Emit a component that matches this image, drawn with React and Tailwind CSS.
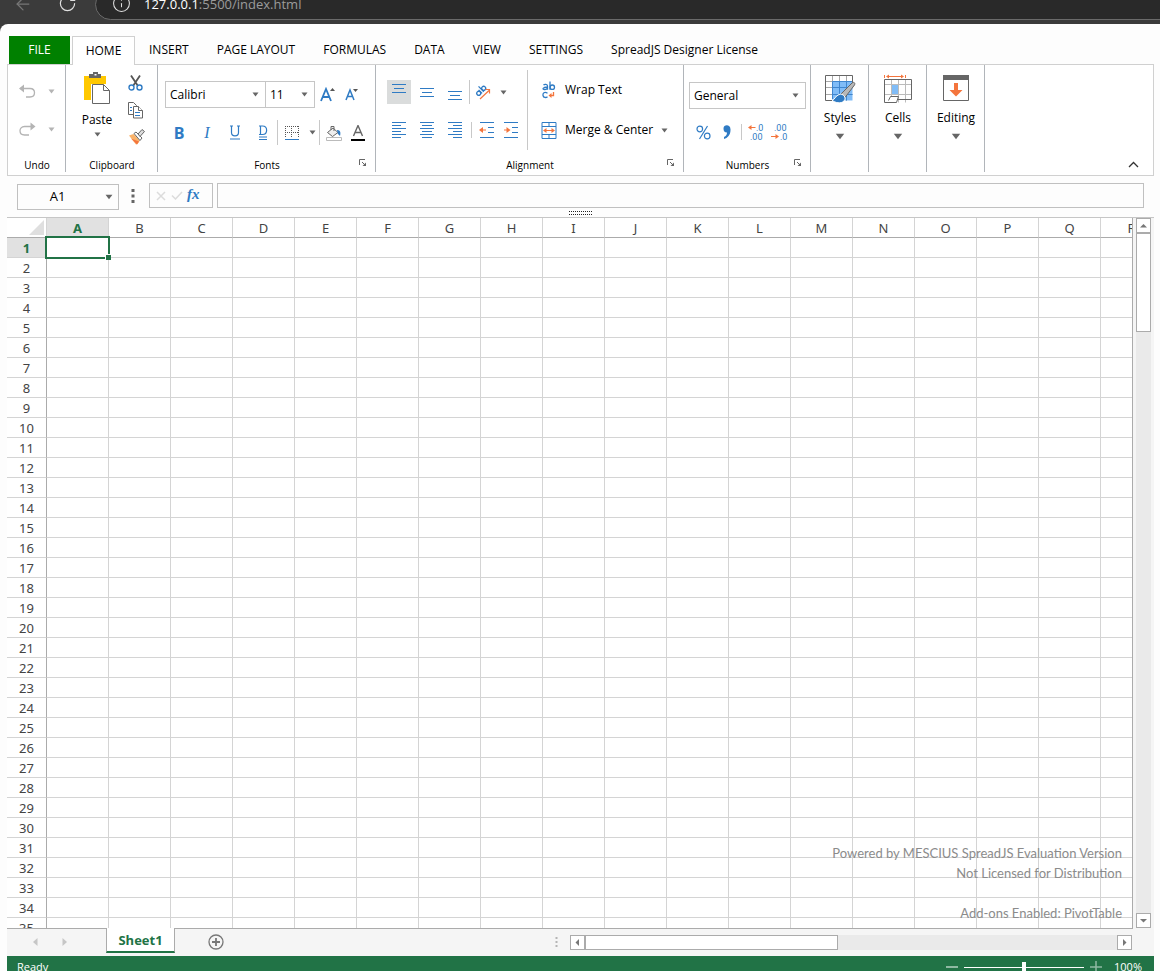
import { ArrowLeft, Info, RotateCw } from 'lucide-react';

const COLUMNS = 'ABCDEFGHIJKLMNOPQR'.split('');
const ROWS = Array.from({ length: 35 }, (_, i) => i + 1);

const TABS = ['INSERT', 'PAGE LAYOUT', 'FORMULAS', 'DATA', 'VIEW', 'SETTINGS', 'SpreadJS Designer License'];

const BLUE = '#2f7bc4';
const ORANGE = '#f4753d';
const GRAY = '#666666';

function Caret({ className = 'text-[#666]' }) {
  return (
    <svg width="7" height="5" viewBox="0 0 7 5" className={`shrink-0 ${className}`}>
      <path d="M0.5 0.5h6l-3 4z" fill="currentColor" />
    </svg>
  );
}

function IconButton({ label, className = 'w-6', children }) {
  return (
    <button type="button" aria-label={label} className={`flex h-6 shrink-0 items-center justify-center ${className}`}>
      {children}
    </button>
  );
}

function Lines({ rows }) {
  return (
    <svg width="24" height="24" viewBox="0 0 24 24" shapeRendering="crispEdges">
      {rows.map(([x, y, w]) => (
        <rect key={y} x={x} y={y} width={w} height="1" fill={BLUE} />
      ))}
    </svg>
  );
}

function Divider({ className = 'h-[25px]' }) {
  return <div className={`w-px shrink-0 bg-[#c8c8c8] ${className}`} />;
}

function Combo({ label, value, className }) {
  return (
    <div className={`relative flex h-[27px] items-center border border-[#c6c6c6] bg-white ${className}`}>
      <select
        aria-label={label}
        defaultValue={value}
        className="h-full w-full appearance-none bg-transparent pl-1 text-xs text-black outline-none"
      >
        <option>{value}</option>
      </select>
      <Caret className="pointer-events-none absolute right-[6px] text-[#666]" />
    </div>
  );
}

function Group({ title, launcher, className, children }) {
  return (
    <section className={`flex h-[107px] shrink-0 flex-col border-r border-[#b1b5ba] ${className}`}>
      <div className="flex-1">{children}</div>
      {title && (
        <div className="relative flex h-[13px] items-center justify-center pl-px text-[10px] leading-[13px]">
          {title}
          {launcher && (
            <button type="button" aria-label={`${title} settings`} className="absolute right-[8px] top-0">
              <svg width="8" height="8" viewBox="0 0 8 8" fill="none" stroke={GRAY}>
                <path d="M0.5 6V0.5H6M3 3l3.5 3.5" />
                <path d="M7 3.5V7H3.5z" fill={GRAY} stroke="none" />
              </svg>
            </button>
          )}
        </div>
      )}
    </section>
  );
}

function BigButton({ label, children }) {
  return (
    <Group className="w-[58px]">
      <button type="button" className="flex w-full flex-col items-center pl-px pt-[9px] text-xs">
        {children}
        <span className="mt-[3px] leading-[18px]">{label}</span>
        <Caret className="mt-[6px] h-[7px] w-[10px] text-[#666]" />
      </button>
    </Group>
  );
}

function UndoGroup() {
  return (
    <Group title="Undo" className="w-[58px]">
      <div className="flex flex-col pt-[7px] text-[#b4b4b4]">
        <button type="button" aria-label="Undo" className="flex h-[38px] items-center gap-3 pl-[11px]">
          <svg width="17" height="15" viewBox="0 0 17 15" fill="none" stroke="currentColor" strokeWidth="1.3">
            <path d="M1.5 4.5h9.5c6 0 6 8.5 0 8.5H7" />
            <path d="M0 4.5L5 0.5v8z" fill="currentColor" stroke="none" />
          </svg>
          <Caret className="text-[#b4b4b4]" />
        </button>
        <button type="button" aria-label="Redo" className="flex h-[38px] items-center gap-3 pl-[11px]">
          <svg width="17" height="15" viewBox="0 0 17 15" fill="none" stroke="currentColor" strokeWidth="1.3">
            <path d="M15 4.5H5.5c-6 0-6 8.5 0 8.5H10" />
            <path d="M16.5 4.5L11.5 0.5v8z" fill="currentColor" stroke="none" />
          </svg>
          <Caret className="text-[#b4b4b4]" />
        </button>
      </div>
    </Group>
  );
}

function ClipboardGroup() {
  return (
    <Group title="Clipboard" className="w-[92px]">
      <div className="flex">
        <button type="button" className="ml-[10px] flex w-[42px] flex-col items-center pt-[7px] text-xs">
          <svg width="26" height="32" viewBox="0 0 26 32">
            <path d="M0 4h22v8H7v16H0z" fill="#ffc800" />
            <path d="M5 5V2h4V0h5v2h3v4H5z" fill={GRAY} />
            <rect x="10.5" y="2" width="2" height="1.5" fill="#fff" />
            <path d="M8.5 12.5h11l6 6v13h-17z" fill="#fff" stroke={GRAY} />
            <path d="M19.5 12.5v6h6" fill="none" stroke={GRAY} />
          </svg>
          <span className="mt-[7px] leading-[18px]">Paste</span>
          <Caret className="mt-[3px] text-[#666]" />
        </button>
        <div className="ml-px flex flex-col gap-[3px] pt-[6px]">
          <IconButton label="Cut" className="w-8">
            <svg width="15" height="16" viewBox="0 0 15 16" fill="none" strokeWidth="1.4">
              <path d="M3 0.5l7 10.5M12 0.5L5 11" stroke="#555" strokeWidth="1.8" />
              <circle cx="3.5" cy="12.5" r="2.5" stroke={BLUE} />
              <circle cx="11.5" cy="12.5" r="2.5" stroke={BLUE} />
            </svg>
          </IconButton>
          <IconButton label="Copy" className="w-8">
            <svg width="15" height="17" viewBox="0 0 15 17" fill="#fff" stroke={GRAY}>
              <path d="M0.5 0.5h5l3 3v9h-8z" />
              <path d="M5.5 4.5h5l4 4v7.5h-9z" />
              <path d="M10.5 4.5v4h4" />
              <path d="M2 5.5h2M2 8.5h2M7 10.5h5M7 13.5h5" stroke={BLUE} />
            </svg>
          </IconButton>
          <IconButton label="Format painter" className="w-9">
            <svg width="16" height="16" viewBox="0 0 16 16">
              <path d="M0 6.5l4.5-1.5 6.5 6.5-2.5 3.5-1.5 0.5z" fill="#f9b36b" />
              <path d="M2 9.500l8 3-2 3z" fill={ORANGE} />
              <path d="M5 4.5l2-1.5 6 6-2 2.5z" fill="#fff" stroke={GRAY} />
              <path d="M9 5l4-4.5 2.5 2-4.5 5z" fill="#ddd" stroke={GRAY} />
            </svg>
          </IconButton>
        </div>
      </div>
    </Group>
  );
}

function FontsGroup() {
  return (
    <Group title="Fonts" launcher className="w-[218px]">
      <div className="flex items-center pl-[7px] pt-4">
        <Combo label="Font family" value="Calibri" className="w-[101px]" />
        <Combo label="Font size" value="11" className="-ml-px w-[50px]" />
        <IconButton label="Increase font size" className="w-[26px]">
          <svg width="16" height="16" viewBox="0 0 16 16">
            <path d="M1 14L6 2l5 12M3 10h6" fill="none" stroke={BLUE} strokeWidth="1.8" />
            <path d="M10 4l2.5-3 2.5 3z" fill="#555" />
          </svg>
        </IconButton>
        <IconButton label="Decrease font size" className="w-[22px]">
          <svg width="14" height="14" viewBox="0 0 14 14">
            <path d="M1 12L5 2l4 10M3 8.5h4" fill="none" stroke={BLUE} strokeWidth="1.5" />
            <path d="M8 1h5l-2.5 3z" fill="#555" />
          </svg>
        </IconButton>
      </div>
      <div className="flex items-center pl-[7px] pt-3 text-base leading-5 text-[#2f7bc4]">
        <IconButton label="Bold" className="w-7 font-bold">B</IconButton>
        <IconButton label="Italic" className="w-7 font-['Liberation_Serif'] italic">I</IconButton>
        <IconButton label="Underline" className="w-7">
          <svg width="12" height="15" viewBox="0 0 12 15" fill="none" stroke={BLUE} strokeWidth="1.2">
            <path d="M2.5 1v6.5c0 4.5 7 4.5 7 0V1M1 1h3M8 1h3M1 14h10" />
          </svg>
        </IconButton>
        <IconButton label="Double underline" className="w-7">
          <svg width="10" height="15" viewBox="0 0 10 15" fill="none" stroke={BLUE} strokeWidth="1.2">
            <path d="M2.5 1v8.5h2c5.5 0 5.5-8.5 0-8.5H1M1 9.5h2M1 12h8M1 14.5h8" />
          </svg>
        </IconButton>
        <Divider />
        <IconButton label="Borders" className="w-7">
          <svg width="14" height="14" viewBox="0 0 14 14" fill="none" shapeRendering="crispEdges">
            <path d="M0 0.5h14M0 6.5h14M0.5 0v12M6.5 0v12M13.5 0v12" stroke="#555" strokeDasharray="1 1" />
            <path d="M0 13.5h14" stroke={BLUE} />
          </svg>
        </IconButton>
        <IconButton label="More borders" className="w-[13px]"><Caret /></IconButton>
        <Divider />
        <IconButton label="Fill color" className="w-7">
          <svg width="16" height="16" viewBox="0 0 16 16">
            <path d="M1.5 7.5L7 3l5 4.5-5.5 4z" fill="#eee" stroke={GRAY} />
            <path d="M5 5V1.5h3V6" fill="none" stroke={GRAY} />
            <path d="M11 5c3 0 4 2 3 6l-2-2z" fill={BLUE} />
            <path d="M0.5 12.5h15v3H0.5z" fill="#fff" stroke="#bbb" />
          </svg>
        </IconButton>
        <IconButton label="Font color" className="w-5">
          <svg width="14" height="16" viewBox="0 0 14 16">
            <path d="M2.5 11L7 0.5 11.5 11M4 7.5h6" fill="none" stroke={GRAY} strokeWidth="1.4" />
            <path d="M0 14h14v2H0z" fill="#000" />
          </svg>
        </IconButton>
      </div>
    </Group>
  );
}

function AlignmentGroup() {
  return (
    <Group title="Alignment" launcher className="w-[308px]">
      <div className="flex">
        <div className="w-[151px] pl-[11px] pt-[15px]">
          <div className="flex items-center">
            <IconButton label="Top align" className="w-6 bg-[#dadcdc]">
              <Lines rows={[[5, 4, 14], [7, 8, 10], [5, 12, 14]]} />
            </IconButton>
            <IconButton label="Middle align" className="ml-1 w-6">
              <Lines rows={[[5, 8, 14], [7, 12, 10], [5, 16, 14]]} />
            </IconButton>
            <IconButton label="Bottom align" className="ml-1 w-6">
              <Lines rows={[[5, 11, 14], [7, 15, 10], [5, 19, 14]]} />
            </IconButton>
            <Divider className="ml-[2px] h-6" />
            <IconButton label="Orientation" className="w-[25px]">
              <svg width="16" height="16" viewBox="0 0 16 16" fill="none">
                <g stroke={BLUE} strokeWidth="1.3" transform="translate(6 7) rotate(-45)">
                  <circle cx="-3.2" cy="0" r="2" />
                  <path d="M-0.9 -2.5v5M1.5 -5v7.5" />
                  <circle cx="3.8" cy="0" r="2" />
                </g>
                <path d="M5 15L14 6.5M10.5 5.5h4v4" stroke={ORANGE} strokeWidth="1.2" />
              </svg>
            </IconButton>
            <Caret className="ml-[5px] text-[#666]" />
          </div>
          <div className="mt-[14px] flex items-center">
            <IconButton label="Align left">
              <Lines rows={[[5, 4, 14], [5, 7, 9], [5, 10, 14], [5, 13, 9], [5, 16, 14], [5, 19, 9]]} />
            </IconButton>
            <IconButton label="Align center" className="ml-1 w-6">
              <Lines rows={[[5, 4, 14], [7, 7, 10], [5, 10, 14], [7, 13, 10], [5, 16, 14], [7, 19, 10]]} />
            </IconButton>
            <IconButton label="Align right" className="ml-1 w-6">
              <Lines rows={[[5, 4, 14], [10, 7, 9], [5, 10, 14], [10, 13, 9], [5, 16, 14], [10, 19, 9]]} />
            </IconButton>
            <Divider className="ml-1 h-4" />
            <IconButton label="Decrease indent" className="ml-[3px] w-6">
              <svg width="16" height="16" viewBox="0 0 16 16" fill="none">
                <path d="M1 0.5h14M9 5.5h6M9 10.5h6M1 15.5h14" stroke={BLUE} />
                <path d="M2 8h5" stroke={ORANGE} />
                <path d="M0 8l4-3v6z" fill={ORANGE} />
              </svg>
            </IconButton>
            <IconButton label="Increase indent">
              <svg width="16" height="16" viewBox="0 0 16 16" fill="none">
                <path d="M1 0.5h14M9 5.5h6M9 10.5h6M1 15.5h14" stroke={BLUE} />
                <path d="M1 8h5" stroke={ORANGE} />
                <path d="M7.5 8l-4-3v6z" fill={ORANGE} />
              </svg>
            </IconButton>
          </div>
        </div>
        <Divider className="mt-[5px] h-[80px]" />
        <div className="pl-[13px] pt-[13px] text-xs">
          <button type="button" className="flex h-6 items-center gap-2 whitespace-nowrap">
            <svg width="16" height="18" viewBox="0 0 16 18" fill="none" stroke={BLUE} strokeWidth="1.3">
              <path d="M2.5 4c1-1 4-1 4 1v3.8M6.5 6c-5 0-5.500 2.500-3 2.500 1.500 0 3-0.500 3-2" />
              <path d="M9 0.5v8.3" />
              <circle cx="11.3" cy="6.2" r="2.2" />
              <path d="M6.5 12.2c-3-2-5 0-4.500 2.300s3 2.500 4.500 1.200" />
              <path d="M12.5 11v3.5H9" stroke={ORANGE} />
              <path d="M7.5 14.5l3-2.5v5z" fill={ORANGE} stroke="none" />
            </svg>
            Wrap Text
          </button>
          <button type="button" className="mt-4 flex h-6 items-center gap-2 whitespace-nowrap">
            <svg width="16" height="17" viewBox="0 0 16 17" fill="none">
              <path d="M1 0.5h14v16H1zM1 4.5h14M1 12.5h14M8 0.5v4M8 12.5v4" stroke={BLUE} />
              <path d="M4 8.5h8" stroke={ORANGE} />
              <path d="M2 8.5l3.5-2.5v5zM14 8.5L10.5 6v5z" fill={ORANGE} />
            </svg>
            Merge &amp; Center
            <Caret />
          </button>
        </div>
      </div>
    </Group>
  );
}

function NumbersGroup() {
  return (
    <Group title="Numbers" launcher className="w-[127px]">
      <div className="pl-[5px] pr-1 pt-[17px]">
        <Combo label="Number format" value="General" className="w-full" />
      </div>
      <div className="flex items-center pl-[6px] pt-[11px]">
        <IconButton label="Percent style" className="w-[26px]">
          <svg width="15" height="15" viewBox="0 0 15 15" fill="none" stroke={BLUE} strokeWidth="1.2">
            <path d="M11.5 1L3.5 14" />
            <circle cx="3.8" cy="4" r="2.8" />
            <circle cx="11.2" cy="11" r="2.8" />
          </svg>
        </IconButton>
        <IconButton label="Comma style" className="w-[22px]">
          <svg width="8" height="14" viewBox="0 0 8 14">
            <path d="M0.5 3.5C0.5-1 8-1 7.5 5c0 5-3 8-6.5 9V12c2-1 3-2.5 3-4.5C1.5 7.5 0.5 6 0.5 3.5z" fill={BLUE} />
          </svg>
        </IconButton>
        <Divider className="ml-[3px] mr-px h-4" />
        <IconButton label="Increase decimal">
          <svg width="18" height="20" viewBox="0 0 18 20" className="font-['Roboto']" fontSize="9" fill={BLUE}>
            <path d="M2 5.5L5.5 3v2h4v1h-4v2z" fill={ORANGE} />
            <text x="10" y="9">.0</text>
            <text x="4" y="18">.00</text>
          </svg>
        </IconButton>
        <IconButton label="Decrease decimal">
          <svg width="18" height="20" viewBox="0 0 18 20" className="font-['Roboto']" fontSize="9" fill={BLUE}>
            <path d="M9 14.5L5.5 12v2H1v1h4.5v2z" fill={ORANGE} />
            <text x="4" y="9">.00</text>
            <text x="10" y="18">.0</text>
          </svg>
        </IconButton>
      </div>
    </Group>
  );
}

function Ribbon() {
  return (
    <div className="flex h-28 border border-[#d0d0d0] bg-white text-black">
      <UndoGroup />
      <ClipboardGroup />
      <FontsGroup />
      <AlignmentGroup />
      <NumbersGroup />
      <BigButton label="Styles">
        <svg width="32" height="32" viewBox="0 0 32 32" fill="none">
          <path d="M1.5 1.5h27v25h-27z" fill="#fff" />
          <path d="M8.5 7.5h20v19h-20z" fill="#80bcf7" />
          <path d="M1.5 7.5h27M1.5 13.5h27M1.5 20.5h27M8.5 1.5v25M15.5 1.5v25M22.5 1.5v25" stroke="#a8a8a8" />
          <path d="M8.5 7.5h20M8.5 13.5h20M8.5 20.5h20M8.5 7.5v19M15.5 7.5v19M22.5 7.5v19" stroke="#3f86cf" />
          <path d="M1.5 26.5v-25h27v8M1.5 26.5h7" stroke={GRAY} />
          <path d="M17 20L28 9c2-1.5 3.5 0 2.5 2L21 23.5z" fill="#b8b8b8" stroke={GRAY} />
          <path d="M8 26c3 0 3-4 7-5.5s8 3 5 6.5c-3 3-9 2-12-1z" fill={BLUE} stroke="#fff" />
        </svg>
      </BigButton>
      <BigButton label="Cells">
        <svg width="30" height="32" viewBox="0 0 30 32" fill="none">
          <path d="M1.5 5.5h27v23h-27z" fill="#fff" />
          <path d="M9 11h6v9H9z" fill="#80bcf7" />
          <path d="M8.5 5.5v23M15.5 5.5v23M22.5 5.5v23M1.5 10.5h27M1.5 20.5h27" stroke="#bbb" />
          <path d="M1.5 28.5v-23h27v20H15" stroke={GRAY} />
          <path d="M1.5 28.5h12l2-6h-8l-2 4" fill="#fff" stroke={GRAY} />
          <path d="M1.5 1v3M22.5 1v3M5 2.5h14" stroke={ORANGE} />
          <path d="M3 2.5l3-2v4zM21 2.5l-3-2v4z" fill={ORANGE} />
        </svg>
      </BigButton>
      <BigButton label="Editing">
        <svg width="28" height="32" viewBox="0 0 28 32" fill="none">
          <path d="M1.5 1.5h25v25h-25z" fill="#fff" stroke={GRAY} />
          <path d="M1 1h26v5H1z" fill={GRAY} />
          <path d="M12 9h4v7h4.5L14 22.5 7.5 16H12z" fill={ORANGE} />
        </svg>
      </BigButton>
      <button type="button" aria-label="Collapse ribbon" className="mb-[7px] ml-auto mr-[14px] self-end">
        <svg width="11" height="7" viewBox="0 0 11 7" fill="none" stroke="#333" strokeWidth="1.3">
          <path d="M1 6l4.5-4.5L10 6" />
        </svg>
      </button>
    </div>
  );
}

function FormulaBar() {
  return (
    <div className="flex items-start px-[10px] pt-[7px]">
      <div className="mt-px flex h-[26px] w-[102px] items-center border border-[#c0c0c0] pr-[5px]">
        <input aria-label="Name box" defaultValue="A1" className="w-full min-w-0 pr-2 text-center text-[13px] outline-none" />
        <Caret className="h-[6px] w-[8px] text-[#666]" />
      </div>
      <svg width="4" height="14" viewBox="0 0 4 14" className="ml-3 mt-[6px] shrink-0" fill={GRAY}>
        <path d="M0.5 0h3v3h-3zM0.5 5.5h3v3h-3zM0.5 11h3v3h-3z" />
      </svg>
      <div className="ml-[14px] flex h-[25px] w-16 shrink-0 items-center border border-[#c0c0c0] pl-[6px]">
        <button type="button" aria-label="Cancel">
          <svg width="10" height="10" viewBox="0 0 10 10" stroke="#dcdcdc" strokeWidth="1.5">
            <path d="M1 1l8 8M9 1L1 9" />
          </svg>
        </button>
        <button type="button" aria-label="Enter" className="ml-[5px]">
          <svg width="12" height="9" viewBox="0 0 12 9" fill="none" stroke="#dcdcdc" strokeWidth="1.5">
            <path d="M1 4.5L4.5 8 11 1" />
          </svg>
        </button>
        <button
          type="button"
          aria-label="Insert function"
          className="ml-1 pb-[3px] font-['Liberation_Serif'] text-[15px] font-bold italic leading-4 text-[#2f7bc4]"
        >
          fx
        </button>
      </div>
      <input aria-label="Formula" className="ml-1 h-[25px] min-w-0 flex-1 border border-[#c0c0c0] px-1 text-[13px] outline-none" />
    </div>
  );
}

function Grid() {
  return (
    <div className="relative min-w-0 flex-1 overflow-hidden border-b border-r border-[#ababab] bg-white">
      <table className="w-[1156px] table-fixed border-separate border-spacing-0 text-center font-['Noto_Sans'] text-[13px] leading-[18px] text-[#444]">
        <thead>
          <tr className="h-5">
            <th className="w-10 border-b border-r border-b-[#ababab] border-r-[#d4d4d4] p-0">
              <svg width="15" height="15" viewBox="0 0 15 15" className="ml-auto mr-[2px]">
                <path d="M15 0v15H0z" fill="#dfdfdf" />
              </svg>
            </th>
            {COLUMNS.map((col) => (
              <th
                key={col}
                className={`w-[62px] border-b border-r border-b-[#ababab] border-r-[#d4d4d4] p-0 pt-px ${
                  col === 'A' ? 'bg-[#e1e1e1] font-bold text-[#217346]' : 'font-normal'
                }`}
              >
                {col}
              </th>
            ))}
          </tr>
        </thead>
        <tbody>
          {ROWS.map((row) => (
            <tr key={row} className="h-5">
              <th
                className={`border-b border-r border-b-[#d4d4d4] border-r-[#ababab] p-0 pt-px ${
                  row === 1 ? 'bg-[#e1e1e1] font-bold text-[#217346]' : 'font-normal'
                }`}
              >
                {row}
              </th>
              {COLUMNS.map((col) => (
                <td key={col} className="border-b border-r border-[#d4d4d4] p-0" />
              ))}
            </tr>
          ))}
        </tbody>
      </table>

      {/* active cell outline and fill handle */}
      <div className="pointer-events-none absolute left-[38px] top-[18px] h-[23px] w-[65px] border-2 border-[#217346]">
        <div className="absolute -bottom-[3px] -right-[3px] size-[6px] border-l border-t border-white bg-[#217346]" />
      </div>

      <div className="pointer-events-none absolute bottom-[5px] right-[10px] text-right font-['Lato'] text-[13px] leading-5 text-[#8b8b8b]">
        <p>Powered by MESCIUS SpreadJS Evaluation Version</p>
        <p>Not Licensed for Distribution</p>
        <p className="mt-5">Add-ons Enabled: PivotTable</p>
      </div>
    </div>
  );
}

function ScrollArrow({ label, d }) {
  return (
    <button type="button" aria-label={label} className="flex size-[15px] shrink-0 items-center justify-center border border-[#ababab] bg-white">
      <svg width="9" height="9" viewBox="0 0 9 9">
        <path d={d} fill="#777" />
      </svg>
    </button>
  );
}

function SheetTabs() {
  return (
    <div className="flex h-[27px] bg-[#f5f5f5] pr-[22px]">
      <div className="flex w-1/2 items-center pb-px">
        <button type="button" aria-label="Previous sheet" className="ml-[26px]">
          <svg width="5" height="8" viewBox="0 0 5 8"><path d="M4.5 0v8L0 4z" fill="#c6c6c6" /></svg>
        </button>
        <button type="button" aria-label="Next sheet" className="ml-6">
          <svg width="5" height="8" viewBox="0 0 5 8"><path d="M0.5 0v8L5 4z" fill="#c6c6c6" /></svg>
        </button>
        <button
          type="button"
          className="relative -mt-px ml-[39px] h-[25px] w-[69px] self-start border-x border-b-2 border-x-[#ababab] border-b-[#217346] bg-white text-[13px] font-bold leading-[22px] text-[#217346]"
        >
          Sheet1
        </button>
        <button type="button" aria-label="New sheet" className="ml-[33px]">
          <svg width="16" height="16" viewBox="0 0 16 16" fill="none" stroke="#777">
            <circle cx="8" cy="8" r="7" strokeWidth="1.3" />
            <path d="M8 4v8M4 8h8" strokeWidth="1.8" />
          </svg>
        </button>
        <svg width="3" height="10" viewBox="0 0 3 10" className="ml-auto mr-3" fill="#b5b5b5">
          <path d="M0.5 0h2v2h-2zM0.5 4h2v2h-2zM0.5 8h2v2h-2z" />
        </svg>
      </div>
      <div className="mt-[6px] flex h-[15px] flex-1 bg-[#eaeaea]">
        <ScrollArrow label="Scroll left" d="M6 1v7L2.5 4.5z" />
        <div className="w-[45%] border border-[#ababab] bg-white" />
        <div className="flex-1" />
        <ScrollArrow label="Scroll right" d="M3 1v7l3.5-3.5z" />
      </div>
    </div>
  );
}

function StatusBar() {
  return (
    <footer className="h-[15px] shrink-0 overflow-hidden bg-[#217346] text-white">
      <div className="flex h-[22px] items-center pl-[10px] pr-3 text-[11px]">
        <span>Ready</span>
        <button type="button" aria-label="Zoom out" className="ml-auto h-[2px] w-3 bg-[#8fb9a2]" />
        <input
          type="range"
          aria-label="Zoom"
          min="0"
          max="200"
          defaultValue="100"
          className="mx-[6px] h-3 w-[120px] appearance-none bg-transparent [&::-webkit-slider-runnable-track]:h-px [&::-webkit-slider-runnable-track]:bg-white [&::-webkit-slider-thumb]:-mt-[5px] [&::-webkit-slider-thumb]:h-[11px] [&::-webkit-slider-thumb]:w-1 [&::-webkit-slider-thumb]:appearance-none [&::-webkit-slider-thumb]:bg-white"
        />
        <button type="button" aria-label="Zoom in">
          <svg width="12" height="12" viewBox="0 0 12 12" stroke="#8fb9a2" strokeWidth="1.5"><path d="M6 0v12M0 6h12" /></svg>
        </button>
        <span className="ml-3">100%</span>
      </div>
    </footer>
  );
}

function BrowserBar() {
  return (
    <div className="flex h-6 shrink-0 items-end overflow-hidden bg-[#3b3b3b] text-[#e0e0e0]">
      <div className="mb-1 flex h-[31px] flex-1 items-center">
        <ArrowLeft size={20} strokeWidth={1.5} className="mb-[2px] ml-[13px] shrink-0 text-[#777]" />
        <RotateCw size={19} strokeWidth={1.5} className="mb-[2px] ml-[25px] shrink-0" />
        <div className="-mr-5 ml-[18px] flex h-full flex-1 items-center rounded-full border border-[#6a6a6a] bg-[#292929] pb-[2px] pl-4">
          <Info size={19} strokeWidth={1.3} />
          <p className="ml-[13px] text-[13px] leading-5 text-[#9b9b9b]">
            <span className="text-white">127.0.0.1</span>:5500/index.html
          </p>
        </div>
      </div>
    </div>
  );
}

export default function App() {
  return (
    <div className="flex h-screen flex-col overflow-hidden bg-[#3b3b3b] font-['Open_Sans',sans-serif]">
      <BrowserBar />
      <div className="flex min-h-0 flex-1 flex-col rounded-tl-lg bg-[#fdfdfd] pl-[7px] pr-[6px] pt-3">
        <nav className="relative z-10 flex h-7 shrink-0 pl-[2px] text-xs text-black">
          <button type="button" className="w-[61px] bg-[#008000] text-white">FILE</button>
          <button type="button" className="-mb-px ml-[2px] w-[63px] border border-b-0 border-[#d0d0d0] bg-white">HOME</button>
          {TABS.map((tab) => (
            <button key={tab} type="button" className="whitespace-nowrap px-[14px]">{tab}</button>
          ))}
        </nav>
        <Ribbon />
        <FormulaBar />
        <div className="flex h-2 shrink-0 items-start justify-center border-b border-[#c6c6c6] pt-px">
          <svg width="24" height="4" viewBox="0 0 24 4" shapeRendering="crispEdges" stroke="#222" strokeDasharray="1 1">
            <path d="M0 0.5h24M0 3.5h24" />
          </svg>
        </div>
        <div className="flex min-h-0 flex-1">
          <Grid />
          <div className="flex w-[21px] shrink-0 flex-col bg-[#f5f5f5] pb-px pl-[3px]">
            <div className="flex w-[15px] flex-1 flex-col bg-[#eaeaea]">
              <ScrollArrow label="Scroll up" d="M1 6.5h7L4.5 3z" />
              <div className="h-[14%] border border-[#ababab] bg-white" />
              <div className="flex-1" />
              <ScrollArrow label="Scroll down" d="M1 3h7L4.5 6.5z" />
            </div>
          </div>
        </div>
        <SheetTabs />
        <StatusBar />
      </div>
    </div>
  );
}
